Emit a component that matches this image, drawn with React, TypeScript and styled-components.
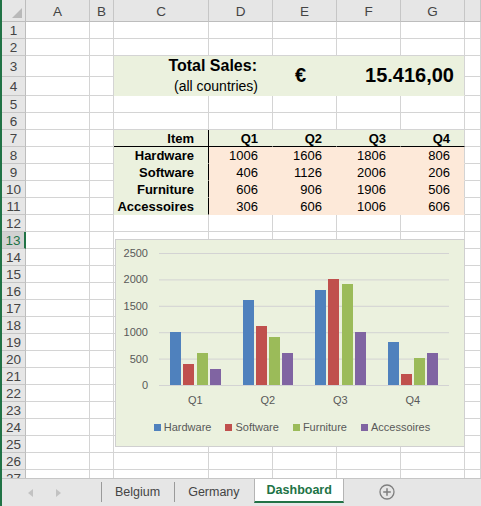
import React from "react";
import styled, { createGlobalStyle } from "styled-components";

const EXCEL_GREEN = "#217346";
const GRID_LINE = "#d4d4d4";
const HEADER_BG = "#e6e6e6";
const HEADER_LINE = "#bdbdbd";
const FILL_GREEN = "#ebf1de";
const FILL_PEACH = "#fde9d9";

const GlobalStyle = createGlobalStyle`
  html, body {
    margin: 0;
    padding: 0;
    background: #ffffff;
  }
  body {
    font-family: "Liberation Sans", Arial, sans-serif;
  }
`;

const COLUMNS = ["A", "B", "C", "D", "E", "F", "G", "H"];
const COL_WIDTHS = [24, 64, 24, 95, 64, 64, 64, 64, 16];
const ROW_COUNT = 27;
const SELECTED_ROW = 13;
const rowHeight = (r: number) => (r === 3 ? 21 : r === 4 ? 19 : 17);
const ROWS = Array.from({ length: ROW_COUNT }, (_, i) => i + 1);

interface Spec {
  text?: string;
  colSpan?: number;
  rowSpan?: number;
  fill?: string;
  bold?: boolean;
  align?: "left" | "center" | "right";
  size?: number;
  pr?: number;
  rightLine?: string;
  bottomLine?: string;
}

const items: [string, number, number, number, number][] = [
  ["Hardware", 1006, 1606, 1806, 806],
  ["Software", 406, 1126, 2006, 206],
  ["Furniture", 606, 906, 1906, 506],
  ["Accessoires", 306, 606, 1006, 606],
];

const specs: Record<string, Spec> = {
  C3: { text: "Total Sales:", colSpan: 2, fill: FILL_GREEN, bold: true, size: 16, align: "right", pr: 15 },
  C4: { text: "(all countries)", colSpan: 2, fill: FILL_GREEN, size: 14, align: "right", pr: 14 },
  E3: { text: "€", rowSpan: 2, fill: FILL_GREEN, bold: true, size: 20, align: "center", pr: 8 },
  F3: { text: "15.416,00", colSpan: 2, rowSpan: 2, fill: FILL_GREEN, bold: true, size: 20, align: "right", pr: 10, rightLine: GRID_LINE },
  C7: { text: "Item", fill: FILL_GREEN, bold: true, align: "right", pr: 14, rightLine: "#000", bottomLine: "#000" },
};
["Q1", "Q2", "Q3", "Q4"].forEach((q, i) => {
  specs[`${COLUMNS[3 + i]}7`] = {
    text: q,
    fill: FILL_GREEN,
    bold: true,
    align: "right",
    pr: 14,
    bottomLine: "#000",
    rightLine: i === 3 ? GRID_LINE : undefined,
  };
});
items.forEach(([name, ...values], r) => {
  const row = 8 + r;
  specs[`C${row}`] = { text: name, fill: FILL_GREEN, bold: true, align: "right", pr: 14, rightLine: "#000" };
  values.forEach((v, i) => {
    specs[`${COLUMNS[3 + i]}${row}`] = {
      text: String(v),
      fill: FILL_PEACH,
      align: "right",
      pr: 14,
      rightLine: i === 3 ? GRID_LINE : undefined,
    };
  });
});
const covered = new Set(["D3", "D4", "E4", "F4", "G3", "G4"]);

const Window = styled.div`
  width: 481px;
  height: 506px;
  box-sizing: border-box;
  border-left: 2px solid ${EXCEL_GREEN};
  display: flex;
  flex-direction: column;
  overflow: hidden;
  background: #ffffff;
`;

const Sheet = styled.div`
  position: relative;
  flex: 1;
  min-height: 0;
  overflow: hidden;
  display: grid;
  grid-template-columns: ${COL_WIDTHS.map((w) => `${w}px`).join(" ")};
  grid-template-rows: 22px ${ROWS.map((r) => `${rowHeight(r)}px`).join(" ")};
  align-content: start;
`;

const Corner = styled.div`
  grid-row: 1;
  grid-column: 1;
  position: relative;
  background: ${HEADER_BG};
  border-right: 1px solid ${HEADER_LINE};
  border-bottom: 1px solid ${HEADER_LINE};
  &::after {
    content: "";
    position: absolute;
    right: 3px;
    bottom: 3px;
    width: 0;
    height: 0;
    border-left: 10px solid transparent;
    border-bottom: 10px solid #b9b9b9;
  }
`;

const ColumnHeader = styled.div<{ $col: number }>`
  grid-row: 1;
  grid-column: ${(p) => p.$col};
  box-sizing: border-box;
  display: flex;
  align-items: center;
  justify-content: center;
  background: ${HEADER_BG};
  border-right: 1px solid #c6c6c6;
  border-bottom: 1px solid ${HEADER_LINE};
  color: #444444;
  font-size: 13.5px;
  padding-top: 1px;
`;

const RowHeader = styled.div<{ $row: number; $selected: boolean }>`
  grid-row: ${(p) => p.$row + 1};
  grid-column: 1;
  box-sizing: border-box;
  display: flex;
  align-items: center;
  justify-content: center;
  background: ${(p) => (p.$selected ? "#d2d2d2" : HEADER_BG)};
  border-right: ${(p) => (p.$selected ? `2px solid ${EXCEL_GREEN}` : `1px solid ${HEADER_LINE}`)};
  border-bottom: 1px solid #c6c6c6;
  color: ${(p) => (p.$selected ? EXCEL_GREEN : "#444444")};
  font-size: 13.5px;
`;

interface CellProps {
  $row: number;
  $col: number;
  $rowSpan: number;
  $colSpan: number;
  $fill?: string;
  $bold?: boolean;
  $align?: "left" | "center" | "right";
  $size: number;
  $pr: number;
  $rightLine?: string;
  $bottomLine?: string;
}

const justify = { left: "flex-start", center: "center", right: "flex-end" };

const Cell = styled.div<CellProps>`
  grid-row: ${(p) => p.$row + 1} / span ${(p) => p.$rowSpan};
  grid-column: ${(p) => p.$col} / span ${(p) => p.$colSpan};
  box-sizing: border-box;
  min-width: 0;
  display: flex;
  align-items: center;
  justify-content: ${(p) => justify[p.$align ?? "left"]};
  padding-right: ${(p) => p.$pr}px;
  background: ${(p) => p.$fill ?? "#ffffff"};
  border-right: 1px solid ${(p) => p.$rightLine ?? p.$fill ?? GRID_LINE};
  border-bottom: 1px solid ${(p) => p.$bottomLine ?? p.$fill ?? GRID_LINE};
  color: #000000;
  font-size: ${(p) => p.$size}px;
  font-weight: ${(p) => (p.$bold ? 700 : 400)};
  white-space: nowrap;
  overflow: hidden;
`;

/* ---------- chart ---------- */

const SERIES = [
  { name: "Hardware", color: "#4f81bd" },
  { name: "Software", color: "#c0504d" },
  { name: "Furniture", color: "#9bbb59" },
  { name: "Accessoires", color: "#8064a2" },
];
const QUARTERS = ["Q1", "Q2", "Q3", "Q4"];

const ChartBox = styled.div`
  position: absolute;
  left: 113px;
  top: 239px;
  width: 350px;
  height: 208px;
  box-sizing: border-box;
  background: ${FILL_GREEN};
  border: 1px solid #d0d0d0;
  display: flex;
  flex-direction: column;
`;

const Plot = styled.svg`
  display: block;
  font-family: "Liberation Sans", Arial, sans-serif;
  font-size: 11px;
`;

const Legend = styled.div`
  height: 14px;
  display: flex;
  align-items: center;
  justify-content: center;
  gap: 14px;
  padding-left: 4px;
  font-size: 11px;
  color: #595959;
`;

const LegendItem = styled.div`
  display: flex;
  align-items: center;
  gap: 3px;
`;

const Swatch = styled.span<{ $color: string }>`
  width: 7px;
  height: 7px;
  background: ${(p) => p.$color};
`;

const PLOT_LEFT = 43;
const PLOT_RIGHT = 333;
const PLOT_TOP = 13;
const PLOT_BOTTOM = 145;
const CAT_W = (PLOT_RIGHT - PLOT_LEFT) / 4;
const yFor = (v: number) => PLOT_BOTTOM - (v / 2500) * (PLOT_BOTTOM - PLOT_TOP);

const SalesChart = () => (
  <ChartBox>
    <Plot width={348} height={180} viewBox="0 0 348 180">
      {[0, 500, 1000, 1500, 2000, 2500].map((v) => (
        <g key={v}>
          <line x1={PLOT_LEFT} x2={PLOT_RIGHT} y1={yFor(v) + 0.5} y2={yFor(v) + 0.5} stroke="#d3d3d3" strokeWidth={1} />
          <text x={32} y={yFor(v) + 4} textAnchor="end" fill="#595959">
            {v}
          </text>
        </g>
      ))}
      {QUARTERS.map((q, i) => (
        <g key={q}>
          {items.map((it, j) => {
            const v = it[1 + i] as number;
            const x = Math.round(PLOT_LEFT + 11 + CAT_W * i + 13.3 * j);
            const y = Math.round(yFor(v));
            return <rect key={j} x={x} y={y} width={11} height={PLOT_BOTTOM - y} fill={SERIES[j].color} />;
          })}
          <text x={PLOT_LEFT + CAT_W * i + CAT_W / 2} y={164} textAnchor="middle" fill="#595959">
            {q}
          </text>
        </g>
      ))}
    </Plot>
    <Legend>
      {SERIES.map((s) => (
        <LegendItem key={s.name}>
          <Swatch $color={s.color} />
          {s.name}
        </LegendItem>
      ))}
    </Legend>
  </ChartBox>
);

/* ---------- sheet tabs ---------- */

const TabBar = styled.div`
  height: 28px;
  flex-shrink: 0;
  box-sizing: border-box;
  background: #e6e6e6;
  border-top: 1px solid #c6c6c6;
  display: flex;
  align-items: stretch;
  font-size: 12.5px;
  color: #444444;
`;

const Nav = styled.div`
  width: 99px;
  display: flex;
  align-items: center;
  gap: 23px;
  padding-left: 26px;
  box-sizing: border-box;
`;

const NavArrow = styled.span<{ $dir: "left" | "right" }>`
  width: 0;
  height: 0;
  border-top: 4px solid transparent;
  border-bottom: 4px solid transparent;
  ${(p) => (p.$dir === "left" ? "border-right: 5px solid #c2c2c2;" : "border-left: 5px solid #c2c2c2;")}
`;

const SheetTab = styled.div`
  position: relative;
  display: flex;
  align-items: center;
  padding: 0 14px 2px 14px;
  &::before {
    content: "";
    position: absolute;
    left: 0;
    top: 3px;
    bottom: 4px;
    width: 1px;
    background: #9a9a9a;
  }
`;

const ActiveTab = styled.div`
  display: flex;
  align-items: center;
  box-sizing: border-box;
  margin-bottom: 3px;
  padding: 0 11px 0 12px;
  background: #ffffff;
  border-left: 1px solid #b4b4b4;
  border-right: 1px solid #b4b4b4;
  border-bottom: 2px solid ${EXCEL_GREEN};
  color: ${EXCEL_GREEN};
  font-weight: 700;
`;

const AddSheet = styled.div`
  display: flex;
  align-items: center;
  margin-left: 35px;
  padding-bottom: 2px;
`;

const PlusCircle = () => (
  <svg width="16" height="16" viewBox="0 0 16 16">
    <circle cx="8" cy="8" r="7" fill="none" stroke="#7f7f7f" strokeWidth="1.3" />
    <path d="M8 4.2v7.6M4.2 8h7.6" stroke="#7f7f7f" strokeWidth="1.5" />
  </svg>
);

export default function App() {
  const cells: React.ReactNode[] = [];
  ROWS.forEach((r) => {
    cells.push(
      <RowHeader key={`rh${r}`} $row={r} $selected={r === SELECTED_ROW}>
        {r}
      </RowHeader>
    );
    COLUMNS.forEach((c, ci) => {
      const key = `${c}${r}`;
      if (covered.has(key)) return;
      const s = specs[key] ?? {};
      cells.push(
        <Cell
          key={key}
          $row={r}
          $col={ci + 2}
          $rowSpan={s.rowSpan ?? 1}
          $colSpan={s.colSpan ?? 1}
          $fill={s.fill}
          $bold={s.bold}
          $align={s.align}
          $size={s.size ?? 13}
          $pr={s.pr ?? 2}
          $rightLine={s.rightLine}
          $bottomLine={s.bottomLine}
        >
          {s.text}
        </Cell>
      );
    });
  });

  return (
    <>
      <GlobalStyle />
      <Window>
        <Sheet>
          <Corner />
          {COLUMNS.map((c, i) => (
            <ColumnHeader key={c} $col={i + 2}>
              {c === "H" ? "" : c}
            </ColumnHeader>
          ))}
          {cells}
          <SalesChart />
        </Sheet>
        <TabBar>
          <Nav>
            <NavArrow $dir="left" />
            <NavArrow $dir="right" />
          </Nav>
          <SheetTab>Belgium</SheetTab>
          <SheetTab>Germany</SheetTab>
          <ActiveTab>Dashboard</ActiveTab>
          <AddSheet>
            <PlusCircle />
          </AddSheet>
        </TabBar>
      </Window>
    </>
  );
}
